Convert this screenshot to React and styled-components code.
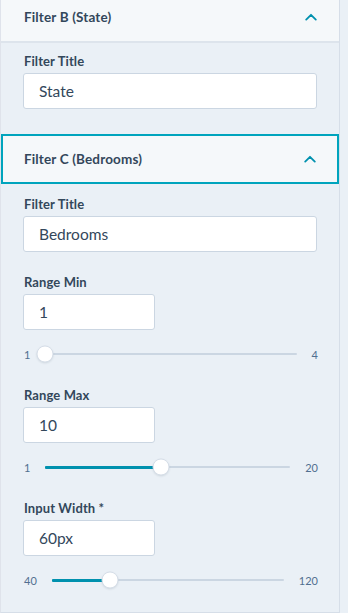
import React from 'react';
import styled, { createGlobalStyle } from 'styled-components';

const GlobalStyle = createGlobalStyle`
  html, body {
    margin: 0;
    padding: 0;
    background: #eaf0f6;
    font-family: "Lato", "Liberation Sans", sans-serif;
    color: #33475b;
    overflow: hidden;
  }
`;

const Panel = styled.div`
  width: 338px;
  margin-top: -7px;
  background: #eaf0f6;
  border-left: 1px solid #dfe3eb;
  border-right: 1px solid #d6dee8;
  border-bottom: 1px solid #d6dee8;
`;

const Header = styled.div`
  height: 50px;
  box-sizing: border-box;
  display: flex;
  align-items: center;
  justify-content: space-between;
  background: #f5f8fa;
  border: ${(p) => (p.$active ? '2px solid #00a4bd' : '0')};
  border-bottom: ${(p) => (p.$active ? '2px solid #00a4bd' : '2px solid #dde4ec')};
  padding-left: ${(p) => (p.$active ? '21px' : '23px')};
  padding-right: ${(p) => (p.$active ? '21px' : '22px')};
  font-size: 13.5px;
  font-weight: 700;
  letter-spacing: 0.15px;
  color: #33475b;
`;

const Body = styled.div`
  padding: ${(p) => p.$top}px 22px ${(p) => p.$bottom}px 22px;
`;

const Field = styled.div`
  margin-bottom: ${(p) => (p.$slider ? '23px' : '22px')};
  &:last-child {
    margin-bottom: 0;
  }
`;

const Label = styled.div`
  font-size: 13px;
  line-height: 16px;
  font-weight: 700;
  letter-spacing: 0.1px;
  color: #33475b;
  margin-bottom: 4px;
  padding-left: 1px;
`;

const Input = styled.div`
  box-sizing: border-box;
  height: 36px;
  width: ${(p) => (p.$short ? '132px' : '294px')};
  background: #fff;
  border: 1px solid #cbd6e2;
  border-radius: 3px;
  display: flex;
  align-items: center;
  padding-left: 15px;
  font-size: 15.5px;
  color: #33475b;
`;

const SliderRow = styled.div`
  margin-top: 14px;
  height: 20px;
  width: 295px;
  display: flex;
  align-items: center;
  gap: 15px;
  font-size: 11px;
  color: #516f90;
`;

const Edge = styled.span`
  padding-left: ${(p) => (p.$left ? '1px' : '0')};
`;

const Track = styled.div`
  position: relative;
  flex: 1;
  height: 2px;
  background: #cbd6e2;
  border-radius: 1px;
`;

const Fill = styled.div`
  position: absolute;
  left: 0;
  top: -0.5px;
  height: 3px;
  background: #0091ae;
  border-radius: 1px;
`;

const Thumb = styled.div`
  position: absolute;
  top: 50%;
  width: 17px;
  height: 17px;
  box-sizing: border-box;
  border-radius: 50%;
  background: #fff;
  border: 1px solid #d6dee8;
  box-shadow: 0 1px 2px rgba(45, 62, 80, 0.12);
  transform: translate(-50%, -50%);
`;

function Chevron() {
  return (
    <svg width="12" height="8" viewBox="0 0 12 8" fill="none">
      <path d="M1.2 6.6 L6 1.8 L10.8 6.6" stroke="#0091ae" strokeWidth="1.8" strokeLinecap="round" strokeLinejoin="round" />
    </svg>
  );
}

function Slider({ min, max, value }) {
  const pct = ((value - min) / (max - min)) * 100;
  return (
    <SliderRow>
      <Edge $left>{min}</Edge>
      <Track>
        <Fill style={{ width: `${pct}%` }} />
        <Thumb style={{ left: `${pct}%` }} />
      </Track>
      <Edge>{max}</Edge>
    </SliderRow>
  );
}

export default function App() {
  return (
    <>
      <GlobalStyle />
      <Panel>
        <Header>
          <span>Filter B (State)</span>
          <Chevron />
        </Header>
        <Body $top={10} $bottom={25}>
          <Field>
            <Label>Filter Title</Label>
            <Input>State</Input>
          </Field>
        </Body>
        <Header $active>
          <span>Filter C (Bedrooms)</span>
          <Chevron />
        </Header>
        <Body $top={12} $bottom={22}>
          <Field>
            <Label>Filter Title</Label>
            <Input>Bedrooms</Input>
          </Field>
          <Field $slider>
            <Label>Range Min</Label>
            <Input $short>1</Input>
            <Slider min={1} max={4} value={1} />
          </Field>
          <Field $slider>
            <Label>Range Max</Label>
            <Input $short>10</Input>
            <Slider min={1} max={20} value={10} />
          </Field>
          <Field $slider>
            <Label>Input Width *</Label>
            <Input $short>60px</Input>
            <Slider min={40} max={120} value={60} />
          </Field>
        </Body>
      </Panel>
    </>
  );
}
